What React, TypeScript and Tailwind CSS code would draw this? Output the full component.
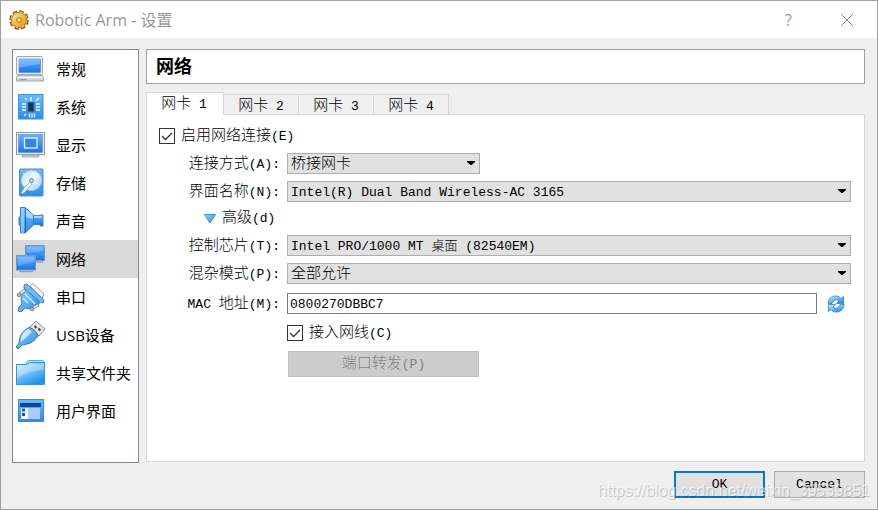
import { useState } from "react";
import type { ReactNode } from "react";

const UI = "font-['Open_Sans','Noto_Sans_CJK_SC',sans-serif]";
const MONO = "font-['Liberation_Mono','Noto_Sans_CJK_SC',monospace]";

const icons: Record<string, ReactNode> = {
  general: (
    <>
      <rect x="1.500" y="2.500" width="26" height="18" rx="1" fill="#eef0f0" stroke="#a2a7aa" />
      <rect x="4" y="5" width="21.500" height="13.500" fill="url(#screen)" stroke="#3c86e6" strokeWidth=".6" />
      <path d="M4 5h21v5C17 11 10 12 4 14z" fill="#fff" opacity=".2" />
      <path d="M2.500 21h24l2 3v3h-27v-3z" fill="#d5d8da" stroke="#9c9fa1" />
      <path d="M2 23.500h26" stroke="#fff" />
      <path d="M4 25.500h8" stroke="#9b9fa2" />
    </>
  ),
  system: (
    <>
      <rect x="3.500" y="2.500" width="24.500" height="24.500" fill="url(#tile)" stroke="#3f8fe0" />
      <rect x="13" y="10.500" width="6" height="9" fill="#26333f" stroke="#1a6fc4" />
      <path d="M7 12h4M7 15h4M7 18h4M21 12h4M21 15h4M21 18h4M10 6l2 2M16 5v4M21 9l3-3M11 22l-2 2M14.500 21.500v4M17 21.500v4M19.500 21.500v4" stroke="#e2f5ff" strokeWidth="1.400" />
    </>
  ),
  display: (
    <>
      <path d="M7 25h17v2H7z" fill="#d6d6d6" stroke="#9a9a9a" strokeWidth=".8" />
      <rect x="1.500" y="2.500" width="28" height="22" fill="#eee" stroke="#969b9f" />
      <rect x="3.500" y="4.500" width="24" height="18" fill="url(#screen)" stroke="#2e82e8" strokeWidth=".5" />
      <rect x="9.500" y="8" width="12.500" height="10" fill="#2e86f5" stroke="#f2f7fb" strokeWidth="1.300" />
    </>
  ),
  storage: (
    <>
      <rect x="4.500" y="1" width="23.500" height="27" rx="1" fill="url(#tile)" stroke="#3f8fe0" />
      <circle cx="16.500" cy="12.500" r="10" fill="url(#disc)" stroke="#b5d5ee" strokeWidth=".8" />
      <path d="M16 12L8 5M16 12l9 5M16 12l5-9" stroke="#fff" opacity=".7" />
      <circle cx="16.500" cy="12.500" r="2" fill="#a7d6f5" stroke="#4785c0" strokeWidth=".8" />
      <path d="M17 16l-7 8-3 2-1-1 3-5 6-6z" fill="#eff7fc" stroke="#7da9cf" strokeWidth=".8" />
    </>
  ),
  audio: (
    <>
      <path d="M5.500 1.500h4.500l8.500 7.500v10l-8.500 8h-4.500v-8h-1.500v-8h1.500z" fill="url(#tile)" stroke="#2b77be" strokeWidth=".9" />
      <path d="M6 2h3v25H6z" fill="#a5dcfb" opacity=".65" />
      <path d="M10 2l8 7v4l-8-2z" fill="#e2f5ff" opacity=".55" />
      <path d="M10.500 2v25" stroke="#1a5fa6" strokeWidth=".8" />
      <path d="M18.500 9.500h6.500v-.5h3v11h-3v-1.500h-6.500z" fill="url(#screen)" stroke="#2b77be" strokeWidth=".8" />
      <path d="M19 11h8" stroke="#bfe5ff" strokeWidth="1.500" />
    </>
  ),
  network: (
    <>
      <rect x="10.500" y="1.500" width="19" height="15" fill="url(#screen)" stroke="#7898ba" />
      <path d="M13 18h15" stroke="#8ba4bd" strokeWidth="1.500" />
      <rect x="1.500" y="11.500" width="19" height="14.500" fill="url(#screen)" stroke="#7898ba" />
      <path d="M4 27.500h14" stroke="#8ba4bd" strokeWidth="1.500" />
      <path d="M3 13h16v4l-16 5zM12 3h16v4l-16 2z" fill="#fff" opacity=".2" />
    </>
  ),
  serial: (
    <>
      <path d="M15 4l3-2.500 11 10.500-2 5z" fill="#f3f3f3" stroke="#8b9298" strokeWidth=".9" />
      <path d="M11 5l14 12-1 5-4 3-5 2-5-1-4 4-3-1 1-4 3-3-1-5 1-4z" fill="url(#sky)" stroke="#2f79b8" strokeWidth=".9" />
      <path d="M9 3l3-1 17 16-1 3-3-1L9 6z" fill="#6dbcf5" stroke="#2870ad" strokeWidth=".8" />
      <path d="M10 12l10 10M8 16l5 5" stroke="#d6f3ff" strokeWidth="1.300" />
      <path d="M4 11l5-4 2 2-5 4zM17 25l6-3 1 2-5 3z" fill="#eee" stroke="#70777d" strokeWidth=".8" />
      <circle cx="4" cy="13" r="1.800" fill="#bbb" stroke="#656d75" strokeWidth=".8" />
      <circle cx="17" cy="27" r="1.800" fill="#bbb" stroke="#656d75" strokeWidth=".8" />
    </>
  ),
  usb: (
    <>
      <path d="M15 7l6-6 9 8-6 7z" fill="#e6e6e6" stroke="#8b8b8b" />
      <path d="M19.500 6l2 2M23.500 8.500l2 2" stroke="#444" strokeWidth="2" />
      <path d="M14 7.500c4 1 8 4 9 8.500-3 4-6 7-11 8l-5 1-4 4-2-2 3-4c0-6 3-12 10-15.500z" fill="url(#sky)" stroke="#2370b7" strokeWidth=".9" />
      <path d="M13 9c-5 3-8 7-7 13l11-10z" fill="#e4f8ff" opacity=".75" />
    </>
  ),
  folder: (
    <>
      <path d="M11.500 7V4l2-1.500h14l2 1.500v10h-18z" fill="#b7e5fb" stroke="#5aaee2" />
      <path d="M1.500 6.500h10l3-2h15v22h-28z" fill="url(#folder)" stroke="#3b93dd" />
      <path d="M2 8h10l3-2h14v6c-12 0-19 4-27 8z" fill="#fff" opacity=".28" />
    </>
  ),
  ui: (
    <>
      <rect x="3.500" y="3.500" width="25" height="22" fill="url(#tile)" stroke="#338cdc" />
      <rect x="5" y="7" width="21" height="4" fill="#0844a8" />
      <rect x="6" y="12" width="7" height="11" fill="#eef8ff" />
      <rect x="13" y="12" width="12" height="11" fill="#a9cdff" />
      <path d="M7 12.500h3v3H7zM7 17h3v3H7z" fill="#1457b5" />
    </>
  ),
};

const sections = [
  ["general", "常规"],
  ["system", "系统"],
  ["display", "显示"],
  ["storage", "存储"],
  ["audio", "声音"],
  ["network", "网络"],
  ["serial", "串口"],
  ["usb", "USB设备"],
  ["folder", "共享文件夹"],
  ["ui", "用户界面"],
];

function Gradients() {
  return (
    <svg className="absolute size-0" aria-hidden="true">
      <defs>
        <linearGradient id="screen" x1="0" y1="0" x2="0" y2="1">
          <stop offset="0" stopColor="#67b2fb" />
          <stop offset="1" stopColor="#1673ed" />
        </linearGradient>
        <linearGradient id="tile" x1="0" y1="0" x2="0" y2="1">
          <stop offset="0" stopColor="#6dbcf8" />
          <stop offset="1" stopColor="#2f8bea" />
        </linearGradient>
        <linearGradient id="sky" x1="0" y1="0" x2="1" y2="1">
          <stop offset="0" stopColor="#9bd9fb" />
          <stop offset="1" stopColor="#2189e9" />
        </linearGradient>
        <linearGradient id="folder" x1="0" y1="0" x2=".6" y2="1">
          <stop offset="0" stopColor="#d4f3ff" />
          <stop offset="1" stopColor="#1f92f0" />
        </linearGradient>
        <linearGradient id="disc" x1="0" y1="0" x2="1" y2="1">
          <stop offset="0" stopColor="#b5dff8" />
          <stop offset=".5" stopColor="#f2faff" />
          <stop offset="1" stopColor="#8bc4ed" />
        </linearGradient>
        <linearGradient id="gold" x1="0" y1="0" x2="1" y2="1">
          <stop offset="0" stopColor="#fff0a0" />
          <stop offset=".5" stopColor="#f8bd3a" />
          <stop offset="1" stopColor="#e8900f" />
        </linearGradient>
      </defs>
    </svg>
  );
}

function Gear() {
  return (
    <svg viewBox="0 0 20 20" className="size-5" aria-hidden="true">
      <circle cx="10" cy="10" r="8" fill="none" stroke="#6b4a1c" strokeWidth="3.500" strokeDasharray="4.200 2.083" />
      <circle cx="10" cy="10" r="7.500" fill="url(#gold)" stroke="#8e601d" strokeWidth=".9" />
      <circle cx="10" cy="10" r="7.700" fill="none" stroke="#f2b23c" strokeWidth="2" strokeDasharray="3 3.047" strokeDashoffset="-.5" />
      <circle cx="10" cy="10" r="2.200" fill="#fff" stroke="#9c651c" />
    </svg>
  );
}

/* Ideographs stand larger than the fixed-width Latin beside them. */
function Mixed({ text }: { text: string }) {
  return (
    <>
      {text.split(/([\x20-\x7e]+)/).map((part, i) =>
        i % 2 ? (
          <span key={i} className="whitespace-pre text-[13px]">{part}</span>
        ) : (
          <span key={i}>{part}</span>
        ),
      )}
    </>
  );
}

function Label({ id, text }: { id: string; text: string }) {
  return (
    <label htmlFor={id} className="pt-0.5 text-right leading-[19px] whitespace-nowrap">
      <Mixed text={text} />
    </label>
  );
}

function Combo({ id, value, size, className = "w-full" }: { id: string; value: string; size: string; className?: string }) {
  return (
    <div className={`relative ${className}`}>
      <select id={id} className={`block h-[21px] w-full appearance-none border border-[#adadad] bg-[#e1e1e1] pt-0.5 pr-5 pl-[3px] leading-[17px] ${size}`}>
        <option>{value}</option>
      </select>
      <svg viewBox="0 0 8 4" className="pointer-events-none absolute top-2 right-[5px] h-1 w-2" aria-hidden="true">
        <path d="M0 0h8v1L4.500 4h-1L0 1z" fill="#000" />
      </svg>
    </div>
  );
}

function Check({ id, text }: { id: string; text: string }) {
  const [on, setOn] = useState(true);
  return (
    <div className="flex h-4 items-center">
      <span className="relative size-4">
        <input id={id} type="checkbox" checked={on} onChange={() => setOn(!on)} className="block size-4 appearance-none border border-[#333] bg-white" />
        {on && (
          <svg viewBox="0 0 16 16" className="pointer-events-none absolute inset-0 size-4" aria-hidden="true">
            <path d="M3 8l3.500 3.500L13 5" fill="none" stroke="#333" strokeWidth="1.300" />
          </svg>
        )}
      </span>
      <label htmlFor={id} className="pt-[3px] pl-1.5 whitespace-nowrap">
        <Mixed text={text} />
      </label>
    </div>
  );
}

export default function App() {
  const [section, setSection] = useState("network");
  const [tab, setTab] = useState(1);
  return (
    <div className={`relative flex min-h-screen flex-col border border-[#a0a0a0] bg-[#efefef] text-[15px] font-light text-black ${MONO}`}>
      <Gradients />
      <header className={`flex h-[37px] items-center bg-white pl-2 text-base font-normal text-[#999] ${UI}`}>
        <Gear />
        <h1 className="grow pl-1.5">Robotic Arm - 设置</h1>
        <button aria-label="帮助" className="h-full w-[57px]">?</button>
        <button aria-label="关闭" className="mr-px flex h-full w-[59px] items-center justify-center">
          <svg viewBox="0 0 12 12" className="size-3" aria-hidden="true">
            <path d="M0 0l12 12M12 0L0 12" stroke="#888" />
          </svg>
        </button>
      </header>

      <div className="flex grow gap-[7px] pt-[11px] pr-3 pl-[11px]">
        <nav className={`mb-[46px] w-[127px] shrink-0 border border-[#828790] bg-white font-normal ${UI}`}>
          {sections.map(([key, name]) => (
            <button
              key={key}
              onClick={() => setSection(key)}
              className={`flex h-[38px] w-full items-center gap-[11px] pl-0.5 whitespace-nowrap ${section === key ? "bg-[#d9d9d9]" : ""}`}
            >
              <svg viewBox="0 0 30 30" className="size-[30px] shrink-0" aria-hidden="true">{icons[key]}</svg>
              {name}
            </button>
          ))}
        </nav>

        <main className="flex min-w-0 grow flex-col">
          <h2 className="flex h-[35px] items-center border border-[#a0a0a0] bg-white pt-0.5 pl-[9px] text-lg font-bold">网络</h2>

          <div role="tablist" className="z-10 mt-2 -mb-px flex h-[23px] items-end">
            {[1, 2, 3, 4].map((n) => (
              <button
                key={n}
                role="tab"
                aria-selected={tab === n}
                onClick={() => setTab(n)}
                className={
                  tab === n
                    ? "h-[23px] w-[78px] border border-b-0 border-[#d9d9d9] bg-white pt-px pr-0.5"
                    : "h-[21px] w-[75px] border border-l-0 border-[#d9d9d9] bg-[#efefef] pt-px"
                }
              >
                <Mixed text={`网卡 ${n}`} />
              </button>
            ))}
          </div>

          <section className="grow border border-[#d9d9d9] bg-white pt-[13px] pr-[13px] pl-3">
            <Check id="enable" text="启用网络连接(E)" />
            <div className="mt-[9px] grid grid-cols-[121px_minmax(0,1fr)] items-center gap-x-[7px] gap-y-[7px]">
              <Label id="attached" text="连接方式(A):" />
              <Combo id="attached" value="桥接网卡" size="text-[15px]" className="w-[193px]" />
              <Label id="name" text="界面名称(N):" />
              <Combo id="name" value="Intel(R) Dual Band Wireless-AC 3165" size="text-[13px]" />
              <button className="col-span-2 flex h-[19px] items-center gap-1.5 pl-[45px]">
                <svg viewBox="0 0 12 10" className="h-2.5 w-3" aria-hidden="true">
                  <path d="M.5.500h11L6 9z" fill="url(#sky)" stroke="#3b91d7" />
                </svg>
                <span className="pt-0.5"><Mixed text="高级(d)" /></span>
              </button>
              <Label id="chip" text="控制芯片(T):" />
              <Combo id="chip" value="Intel PRO/1000 MT 桌面 (82540EM)" size="text-[13px]" />
              <Label id="mode" text="混杂模式(P):" />
              <Combo id="mode" value="全部允许" size="text-[15px]" />
            </div>
            <div className="mt-[9px] grid grid-cols-[121px_minmax(0,1fr)] items-center gap-x-[7px]">
              <Label id="mac" text="MAC 地址(M):" />
              <div className="flex items-center gap-2.5">
                <input id="mac" defaultValue="0800270DBBC7" className="h-[21px] min-w-0 grow border border-[#7a7a7a] bg-white px-0.5 pt-0.5 text-[13px]" />
                <button aria-label="刷新" className="mr-1.5 size-[18px]">
                  <svg viewBox="0 0 18 18" aria-hidden="true">
                    <path d="M1 8.500C1 4 4.500 1 8.500 1c2.500 0 4.500.8 5.500 2.500L16.500 1.500v7h-7L12 6C9.500 4 6 4.500 5 8.500z" fill="url(#folder)" stroke="#2f80b8" strokeWidth=".8" />
                    <path d="M17 9.500c0 4.500-3.500 7.500-7.500 7.500-2.500 0-4.500-.8-5.500-2.500L1.500 16.500v-7h7L6 12c2.500 2 6 1.500 7-2.500z" fill="url(#folder)" stroke="#2f80b8" strokeWidth=".8" />
                  </svg>
                </button>
              </div>
            </div>
            <div className="mt-[11px] flex flex-col items-start gap-2.5 pl-32">
              <Check id="cable" text="接入网线(C)" />
              <button disabled className="ml-px h-[26px] w-[191px] border border-[#bfbfbf] bg-[#ccc] pt-0.5 text-[#838383]">
                <Mixed text="端口转发(P)" />
              </button>
            </div>
          </section>

          <footer className="flex justify-end gap-[9px] pt-[9px] pb-[11px] text-[13px]">
            <button className="h-[27px] w-[91px] border-2 border-[#0078d7] bg-[#e1e1e1] pt-px">OK</button>
            <button className="h-[27px] w-[91px] border border-[#adadad] bg-[#e1e1e1] pt-px">Cancel</button>
          </footer>
        </main>
      </div>
      <p className="pointer-events-none absolute right-[7px] bottom-2 z-20 font-['Liberation_Sans',sans-serif] text-base leading-5 text-white/60 [text-shadow:1px_1px_1px_#0003]">
        https://blog.csdn.net/weixin_39539851
      </p>
    </div>
  );
}
